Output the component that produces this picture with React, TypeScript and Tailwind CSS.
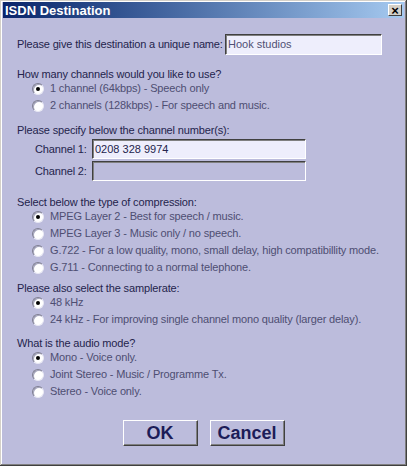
import React from 'react'

const font = { fontFamily: '"Liberation Sans", Arial, sans-serif' }

const Radio = ({ checked, label }: { checked?: boolean; label: string }) => (
  <div className="h-[17px] flex items-center pl-[15px] shrink-0">
    <span className="relative shrink-0 w-[12px] h-[12px] rounded-full bg-white border border-t-[#7c7c90] border-l-[#7c7c90] border-b-[#e8e8f4] border-r-[#e8e8f4] shadow-[inset_1px_1px_0_#a4a4bc] flex items-center justify-center">
      {checked && <span className="w-[4px] h-[4px] rounded-full bg-black" />}
    </span>
    <span className="ml-[6px] text-[11px] tracking-[-0.15px] text-[#4e4e72] whitespace-nowrap">{label}</span>
  </div>
)

const Label = ({ text, className = '' }: { text: string; className?: string }) => (
  <div className={`h-[12px] shrink-0 flex items-center text-[11px] tracking-[-0.15px] text-[#24244c] whitespace-nowrap ${className}`}>
    {text}
  </div>
)

const Field = ({ value, disabled, className = '' }: { value?: string; disabled?: boolean; className?: string }) => (
  <div
    className={`h-[20px] shrink-0 flex items-center px-[2px] text-[11px] border border-t-[#404040] border-l-[#404040] border-b-white border-r-white shadow-[inset_1px_1px_0_#808080] ${disabled ? 'bg-[#bcbcdc]' : 'bg-[#eeeefc]'} ${className}`}
  >
    {value}
  </div>
)

const Button = ({ label }: { label: string }) => (
  <button className="w-[75px] h-[26px] shrink-0 bg-[#bcbcdc] border border-t-white border-l-white border-b-[#404040] border-r-[#404040] shadow-[inset_-1px_-1px_0_#808080] text-[18px] font-bold leading-none text-[#1c1c58] flex items-center justify-center">
    {label}
  </button>
)

export default function App() {
  return (
    <div style={font} className="w-[407px] h-[466px] bg-[#bcbcdc] p-[3px] shadow-[inset_-1px_-1px_0_#404040,inset_1px_1px_0_#d4d0c8,inset_-2px_-2px_0_#808080,inset_2px_2px_0_#ffffff] flex flex-col">
      {/* title bar */}
      <div className="h-[16px] shrink-0 mt-[-1px] flex items-center justify-between pl-[2px] pr-[2px] bg-gradient-to-r from-[#0a246a] to-[#a6caf0]">
        <span className="text-white font-bold text-[13px] leading-none">ISDN Destination</span>
        <span className="w-[14px] h-[12px] bg-[#d4d0c8] border border-t-white border-l-white border-b-[#404040] border-r-[#404040] flex items-center justify-center text-[13px] font-bold leading-none text-black">
          ×
        </span>
      </div>

      <div className="flex flex-col pl-[14px] pt-[16px]">
        <div className="flex items-center h-[21px] shrink-0">
          <span className="text-[11px] tracking-[-0.15px] text-[#24244c] whitespace-nowrap">Please give this destination a unique name:</span>
          <Field value="Hook studios" className="ml-auto mr-[22px] w-[157px] h-[21px] text-[#505074]" />
        </div>

        <Label text="How many channels would you like to use?" className="mt-[13px]" />
        <Radio checked label="1 channel (64kbps) - Speech only" />
        <Radio label="2 channels (128kbps) - For speech and music." />

        <Label text="Please specify below the channel number(s):" className="mt-[10px]" />
        <div className="flex items-center mt-[3px] pl-[18px] shrink-0">
          <span className="w-[57px] shrink-0 whitespace-nowrap text-[11px] tracking-[-0.15px] text-[#24244c]">Channel 1:</span>
          <Field value="0208 328 9974" className="w-[214px] text-[#24244c]" />
        </div>
        <div className="flex items-center mt-[2px] pl-[18px] shrink-0">
          <span className="w-[57px] shrink-0 whitespace-nowrap text-[11px] tracking-[-0.15px] text-[#24244c]">Channel 2:</span>
          <Field disabled className="w-[214px]" />
        </div>

        <Label text="Select below the type of compression:" className="mt-[15px]" />
        <Radio checked label="MPEG Layer 2 - Best for speech / music." />
        <Radio label="MPEG Layer 3 - Music only / no speech." />
        <Radio label="G.722 - For a low quality, mono, small delay, high compatibillity mode." />
        <Radio label="G.711 - Connecting to a normal telephone." />

        <Label text="Please also select the samplerate:" className="mt-[6px]" />
        <Radio checked label="48 kHz" />
        <Radio label="24 kHz - For improving single channel mono quality (larger delay)." />

        <Label text="What is the audio mode?" className="mt-[9px]" />
        <Radio checked label="Mono - Voice only." />
        <Radio label="Joint Stereo - Music / Programme Tx." />
        <Radio label="Stereo - Voice only." />
      </div>

      <div className="flex justify-center gap-[12px] mt-[20px] shrink-0">
        <Button label="OK" />
        <Button label="Cancel" />
      </div>
    </div>
  )
}
